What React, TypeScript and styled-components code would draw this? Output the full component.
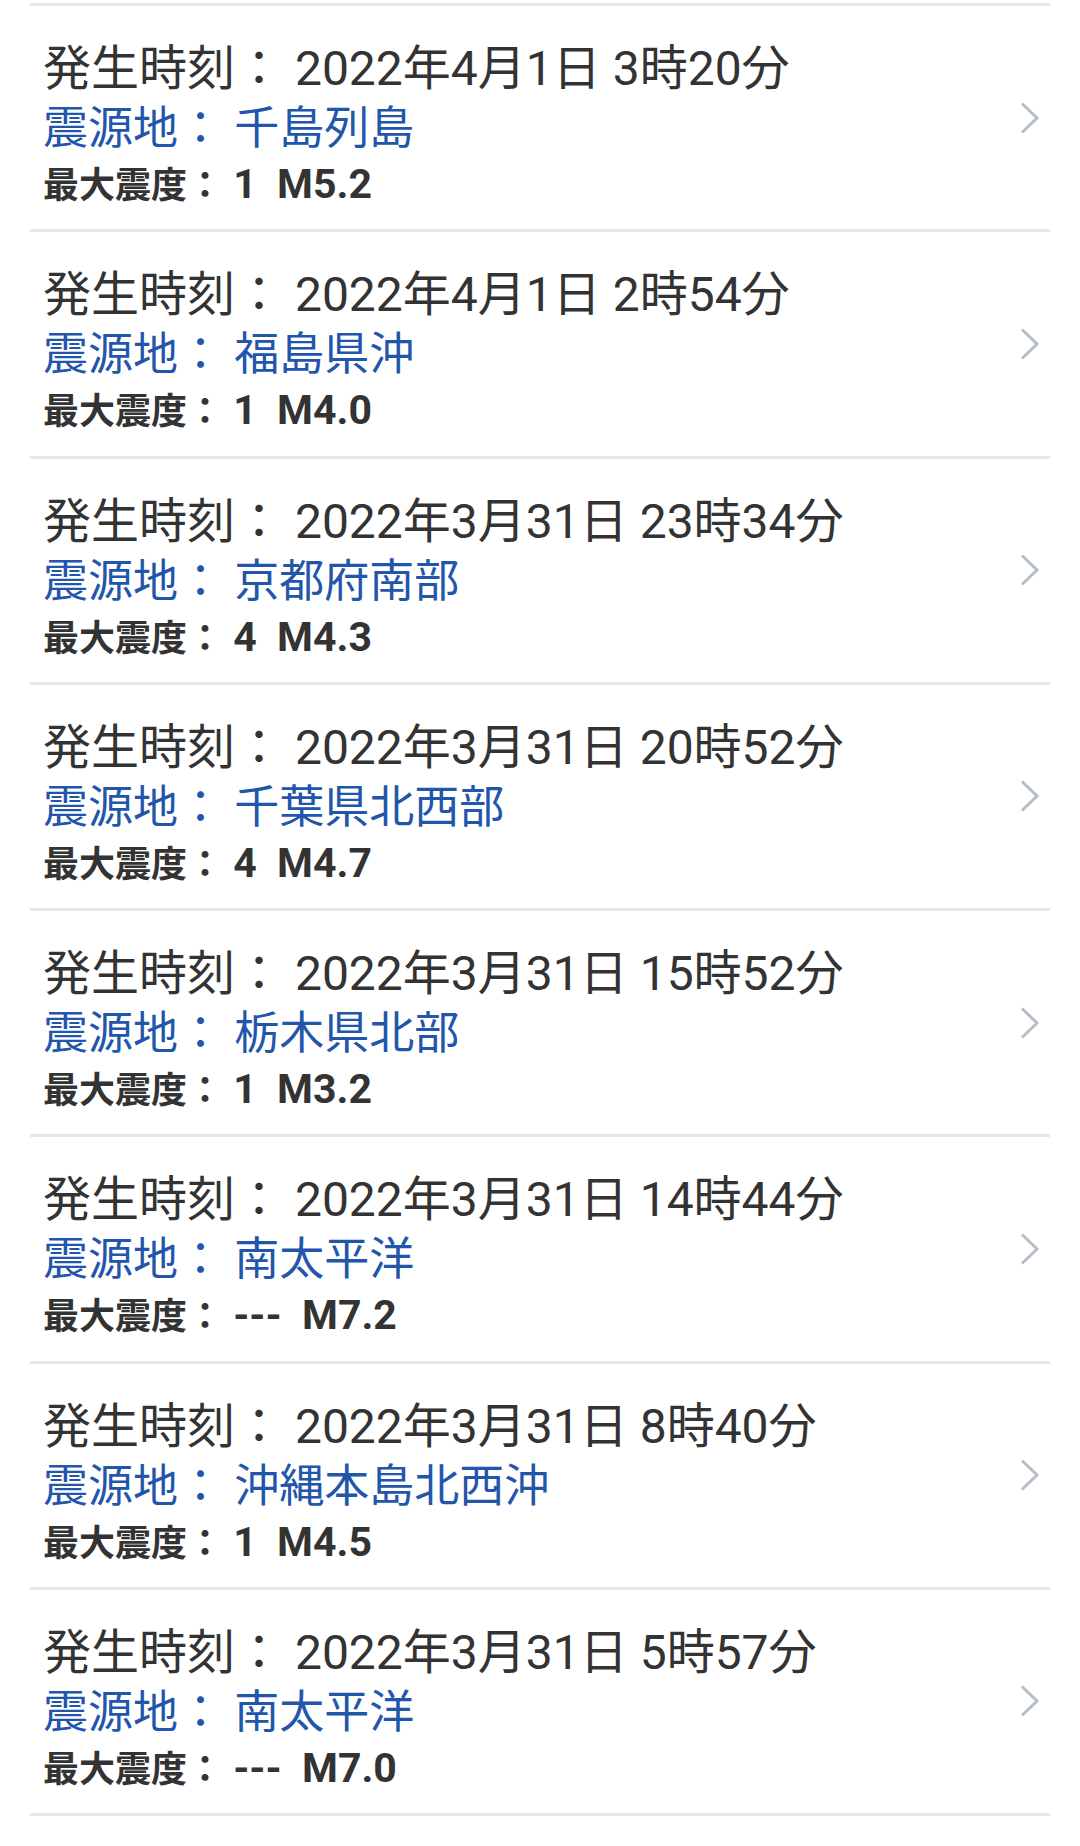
import React from "react";
import styled, { createGlobalStyle } from "styled-components";

const GlobalStyle = createGlobalStyle`
  html, body {
    margin: 0;
    padding: 0;
    background: #ffffff;
  }
  body {
    font-family: Roboto, "Noto Sans CJK JP", sans-serif;
    color: #333333;
  }
`;

const Page = styled.div`
  width: 1080px;
  min-height: 1846px;
  padding-top: 3px;
  box-sizing: border-box;
  background: #ffffff;
`;

const List = styled.ul`
  list-style: none;
  margin: 0 30px;
  padding: 0;
  border-top: 3px solid #e6e6e6;
`;

const Item = styled.li`
  display: flex;
  align-items: center;
  height: 223.25px;
  border-bottom: 3px solid #e6e6e6;
  padding: 0 10px 0 13px;
`;

const Body = styled.div`
  flex: 1;
  display: flex;
  flex-direction: column;
  align-self: flex-start;
  padding-top: 33px;
  white-space: pre;
`;

const TimeLine = styled.div`
  font-size: 48px;
  line-height: 60px;
  color: #333333;
`;

const PlaceLine = styled.div`
  font-size: 45px;
  line-height: 60px;
  color: #2256ab;
`;

const ScaleLine = styled.div`
  font-size: 36px;
  line-height: 50px;
  font-weight: 700;
  color: #333333;
`;

const ScaleValue = styled.span`
  font-size: 41px;
`;

const Chevron = styled.svg`
  width: 20px;
  height: 32px;
  flex-shrink: 0;
`;

type Quake = {
  time: string;
  place: string;
  intensity: string;
  magnitude: string;
};

const quakes: Quake[] = [
  { time: "2022年4月1日 3時20分", place: "千島列島", intensity: "1", magnitude: "M5.2" },
  { time: "2022年4月1日 2時54分", place: "福島県沖", intensity: "1", magnitude: "M4.0" },
  { time: "2022年3月31日 23時34分", place: "京都府南部", intensity: "4", magnitude: "M4.3" },
  { time: "2022年3月31日 20時52分", place: "千葉県北西部", intensity: "4", magnitude: "M4.7" },
  { time: "2022年3月31日 15時52分", place: "栃木県北部", intensity: "1", magnitude: "M3.2" },
  { time: "2022年3月31日 14時44分", place: "南太平洋", intensity: "---", magnitude: "M7.2" },
  { time: "2022年3月31日 8時40分", place: "沖縄本島北西沖", intensity: "1", magnitude: "M4.5" },
  { time: "2022年3月31日 5時57分", place: "南太平洋", intensity: "---", magnitude: "M7.0" },
];

export default function App() {
  return (
    <Page>
      <GlobalStyle />
      <List>
        {quakes.map((q, i) => (
          <Item key={i}>
            <Body>
              <TimeLine>{`発生時刻： ${q.time}`}</TimeLine>
              <PlaceLine>{`震源地： ${q.place}`}</PlaceLine>
              <ScaleLine>
                {"最大震度："}
                <ScaleValue>{` ${q.intensity}  ${q.magnitude}`}</ScaleValue>
              </ScaleLine>
            </Body>
            <Chevron viewBox="0 0 20 32" fill="none">
              <path d="M2 1.5 L17 16 L2 30.5" stroke="#b5bdc7" strokeWidth="3" />
            </Chevron>
          </Item>
        ))}
      </List>
    </Page>
  );
}
